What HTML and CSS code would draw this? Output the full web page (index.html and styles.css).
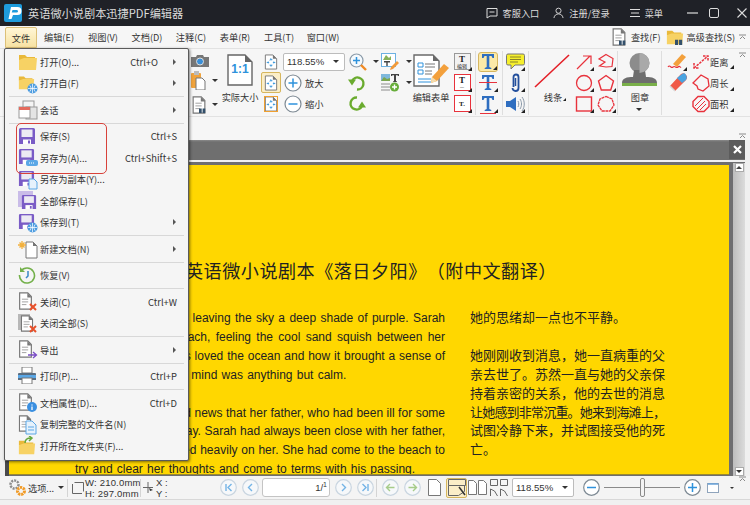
FILE: index.html
```html
<!DOCTYPE html>
<html lang="zh-CN">
<head>
<meta charset="utf-8">
<title>迅捷PDF编辑器</title>
<link rel="stylesheet" href="styles.css">
</head>
<body>
<svg class="defs" width="0" height="0">
  <symbol id="folder" viewBox="0 0 20 20"><path d="M1 3h6l2 2h8v3H1z" fill="#e9b93a"/><path d="M1 18V8l5-2h13l-1 12z" fill="#f7d264"/></symbol>
  <symbol id="globe" viewBox="0 0 12 12"><circle cx="6" cy="6" r="5.500" fill="#4a9be0"/><path d="M1 6h10M6 1v10M3 2.500c2 3 2 4 0 7M9 2.500c-2 3-2 4 0 7" stroke="#fff" stroke-width=".8" fill="none"/></symbol>
  <symbol id="floppy" viewBox="0 0 18 18"><path d="M1 2.500A1.500 1.500 0 0 1 2.500 1h13A1.500 1.500 0 0 1 17 2.500V17H1z" fill="#7a5cc6"/><rect x="3.500" y="2.500" width="11" height="7.500" fill="#eceaf3"/><rect x="5" y="12.500" width="8" height="4.500" fill="#fff"/><rect x="10" y="13.500" width="2" height="3" fill="#7a5cc6"/></symbol>
  <symbol id="doc" viewBox="0 0 16 20"><path d="M1.500 1h9l4 4v14h-13z" fill="#fff" stroke="#777" stroke-width="1.300"/><path d="M10 1l5 5h-5z" fill="#777"/><path d="M4 8h7M4 11h7M4 14h5" stroke="#999"/></symbol>
  <symbol id="xmark" viewBox="0 0 8 8"><path d="M1 1l6 6M7 1L1 7" stroke="#e8502a" stroke-width="2"/></symbol>
  <symbol id="fitdoc" viewBox="0 0 14 17"><path d="M1 1h8l4 4v11H1z" fill="#fff" stroke="#777"/><path d="M9 1l4 4H9z" fill="#777"/><path d="M7 5v2M5.500 6.500L7 5l1.500 1.500M7 13v-2M5.500 11.500L7 13l1.500-1.500M3 9h2M9 9h2M4 8l-1 1 1 1M10 8l1 1-1 1" stroke="#2e92dc" fill="none"/></symbol>
  <symbol id="tee" viewBox="0 0 16 17"><path d="M2 1h12v4h-1.500L11.500 3H9.300v11l2 1v1H4.700v-1l2-1V3H4.500L3.500 5H2z" fill="#2f6ec0"/></symbol>
  <symbol id="poly" viewBox="0 0 18 18"><path d="M9 1.500l7.500 5.500-2.800 9H4.300L1.500 7z" fill="none" stroke="#e8323c" stroke-width="1.400"/></symbol>
  <symbol id="rotate" viewBox="0 0 18 18"><path d="M4 7A6 6 0 1 1 9 15.500" fill="none" stroke="#6aab2e" stroke-width="2.400"/><path d="M0 5.500h8L4 11.500z" fill="#6aab2e"/></symbol>
  <symbol id="caret" viewBox="0 0 6 3"><path d="M0 0h6L3 3z" fill="#333"/></symbol>
  <symbol id="grip" viewBox="0 0 7 6"><path d="M0 1h7M1 5l2.500-2.500L6 5" stroke="#8a8a8a" fill="none"/></symbol>
  <symbol id="nav" viewBox="0 0 17 17"><circle cx="8.500" cy="8.500" r="7.800" fill="#f6f8fa" stroke="#c9d5e0" stroke-width="1.200"/></symbol>
</svg>

<div class="window">
  <header class="titlebar">
    <svg class="logo" width="18" height="18" viewBox="0 0 18 18"><rect width="18" height="18" rx="2" fill="#1e9bdc"/><path d="M7 3h6.500a3 3 0 0 1 0 8H9l-1.500 4H4.500z" fill="#fff"/><path d="M8.500 6l-.8 2.500h5a1.200 1.200 0 0 0 0-2.500z" fill="#1e9bdc"/></svg>
    <span class="app-name">英语微小说剧本迅捷PDF编辑器</span>
    <div class="title-actions">
      <svg width="12" height="12" viewBox="0 0 12 12"><path d="M1 1.500h10v7.500H4L1 11z" fill="none" stroke="#ddd"/><path d="M3.500 5h5" stroke="#ddd"/></svg>
      <span class="ta ta-service">客服入口</span>
      <svg width="11" height="12" viewBox="0 0 12 12"><circle cx="6" cy="3.500" r="2.800" fill="none" stroke="#ddd"/><path d="M1 11.500c.5-3 2.500-4.500 5-4.500s4.500 1.500 5 4.500" fill="none" stroke="#ddd"/></svg>
      <span class="ta ta-login">注册/登录</span>
      <svg width="10" height="10" viewBox="0 0 10 10"><path d="M0 1.500h10M1 5h8M0 8.500h10" stroke="#ddd"/></svg>
      <span class="ta ta-menu">菜单</span>
      <svg class="win-min" width="11" height="2" viewBox="0 0 11 2"><path d="M0 1h11" stroke="#ddd" stroke-width="1.200"/></svg>
      <svg class="win-max" width="10" height="10" viewBox="0 0 10 10"><rect x=".5" y=".5" width="9" height="9" rx="1.500" fill="none" stroke="#ddd"/></svg>
      <svg class="win-close" width="10" height="10" viewBox="0 0 10 10"><path d="M.5.500l9 9M9.500.500l-9 9" stroke="#ddd" stroke-width="1.100"/></svg>
    </div>
  </header>

  <nav class="menubar">
    <span class="mi mi-active">文件</span>
    <span class="mi">编辑(E)</span><span class="mi">视图(V)</span><span class="mi">文档(D)</span><span class="mi">注释(C)</span><span class="mi">表单(R)</span><span class="mi">工具(T)</span><span class="mi">窗口(W)</span>
    <div class="find">
      <svg width="16" height="18" viewBox="0 0 16 20"><use href="#doc"/><path d="M8 14h3v5H8zM12 14h3v5h-3z" fill="#33506b"/></svg>
      <span class="find-label">查找(F)</span>
      <svg class="adv" width="20" height="18" viewBox="0 0 20 20"><use href="#folder"/><path d="M10 13h3.500v6H10zM14.500 13H18v6h-3.500z" fill="#33506b"/></svg>
      <span class="find-label find-adv">高级查找(S)</span>
      <svg class="grip" width="7" height="6"><use href="#grip"/></svg>
    </div>
  </nav>

  <section class="ribbon">
    <div class="g g-hidden"></div>
    <div class="g g-clip">
      <svg width="18" height="13" viewBox="0 0 18 13"><path d="M0 3h5l1-2h6l1 2h5v10H0z" fill="#777"/><circle cx="9" cy="7.500" r="3.500" fill="#3a8fd8" stroke="#ddd"/></svg>
      <div class="with-caret"><svg width="15" height="19" viewBox="0 0 15 19"><rect y="2" width="10" height="15" rx="1" fill="#f0a33c"/><rect x="3" y="0" width="5" height="4" fill="#bbb"/><path d="M5 7h6l3 3v9H5z" fill="#fff" stroke="#777"/></svg><svg class="caret" width="6" height="3"><use href="#caret"/></svg></div>
      <div class="with-caret"><svg width="16" height="18" viewBox="0 0 16 20"><use href="#doc"/><path d="M8 14h3v5H8zM12 14h3v5h-3z" fill="#33506b"/></svg><svg class="caret caret-t" width="6" height="3"><use href="#caret"/></svg></div>
    </div>
    <div class="g g-actual">
      <svg width="26" height="32" viewBox="0 0 26 32"><path d="M1 1h17l7 7v23H1z" fill="#fff" stroke="#666" stroke-width="1.400"/><path d="M18 1l7 7h-7z" fill="#666"/></svg>
      <span class="one-one">1:1</span>
      <span class="lbl lbl-big">实际大小</span>
    </div>
    <div class="g g-zoom">
      <svg class="fit" width="14" height="16"><use href="#fitdoc"/></svg>
      <div class="combo"><span>118.55%</span><svg width="6" height="3"><use href="#caret"/></svg></div>
      <div class="with-caret wide"><svg width="18" height="18" viewBox="0 0 18 18"><circle cx="7.500" cy="7.500" r="6.500" fill="#f5fafe" stroke="#8a9aa8" stroke-width="1.200"/><path d="M4 7.500h7M7.500 4v7" stroke="#2e92dc" stroke-width="1.500"/><path d="M12 12l5 5" stroke="#f08a24" stroke-width="2.400"/></svg><svg class="caret" width="6" height="3"><use href="#caret"/></svg></div>
      <div class="fit fit-on"><svg width="14" height="16"><use href="#fitdoc"/></svg></div>
      <div class="zbtn"><svg width="18" height="18" viewBox="0 0 18 18"><circle cx="9" cy="9" r="8" fill="#fff" stroke="#7e8a94" stroke-width="1.200"/><path d="M4.500 9h9M9 4.500v9" stroke="#2e92dc" stroke-width="1.500"/></svg><span class="lbl">放大</span></div>
      <svg class="rot" width="18" height="18"><use href="#rotate"/></svg>
      <svg class="fit fit-o" width="14" height="16"><use href="#fitdoc"/></svg>
      <div class="zbtn"><svg width="18" height="18" viewBox="0 0 18 18"><circle cx="9" cy="9" r="8" fill="#fff" stroke="#7e8a94" stroke-width="1.200"/><path d="M4.500 9h9" stroke="#2e92dc" stroke-width="1.500"/></svg><span class="lbl">缩小</span></div>
      <svg class="rot rot-cw" width="18" height="18"><use href="#rotate"/></svg>
    </div>
    <div class="g g-img">
      <div class="with-caret"><svg width="20" height="19" viewBox="0 0 20 19"><rect x="1.500" y="1.500" width="14" height="13" fill="#fff" stroke="#6db1e2"/><path d="M3 8l3-5 3 3 2-2v4z" fill="#89b25a"/><path d="M4 9h6v1.500H7.700V14H6.300v-3.500H4z" fill="#444"/><path d="M10 18l1-3 6-6 2 2-6 6z" fill="#f19a3a"/></svg><svg class="caret" width="6" height="3"><use href="#caret"/></svg></div>
      <div class="with-caret"><svg width="20" height="19" viewBox="0 0 20 19"><rect x="1" y="1" width="9" height="7" fill="#7fb8dc"/><path d="M1 8l3-4 3 2 3-1v3z" fill="#7ba64f"/><path d="M11 1h8v2h-1l-.5-.8H16V8l1 .5V9h-4v-.5l1-.5V2.200h-1.500L12 3h-1z" fill="#444"/><path d="M1 11h9M1 14h9M1 17h9" stroke="#8c8c8c"/><circle cx="14.500" cy="14" r="4.500" fill="#67ad3a"/><path d="M12 14h5M14.500 11.500v5" stroke="#fff" stroke-width="1.400"/></svg><svg class="caret" width="6" height="3"><use href="#caret"/></svg></div>
    </div>
    <div class="g g-form">
      <svg width="36" height="33" viewBox="0 0 36 33"><path d="M1 1h19l6 6v25H1z" fill="#fff" stroke="#6a6a6a" stroke-width="1.400"/><path d="M20 1l6 6h-6z" fill="#6a6a6a"/><path d="M5 9h5v4H5zM5 16h5v4H5z" fill="none" stroke="#2e92dc"/><path d="M12 10h10M12 13h10M12 17h7M12 20h7" stroke="#777"/><path d="M5 25h13M5 28h13" stroke="#2e92dc"/><path d="M18 29l1-6 12-13 5 4-12 13z" fill="#f3a03c"/><path d="M18 29l1-6 5 4z" fill="#f4dcae"/></svg>
      <span class="lbl lbl-big">编辑表单</span>
    </div>
    <div class="g g-col sep">
      <div class="btn tri"><span class="tbox">T<small>编辑</small></span></div>
      <div class="btn tri"><span class="tbox red">T<small>—</small></span></div>
      <div class="btn tri"><span class="tbox red sm">T.</span></div>
    </div>
    <div class="g g-col g-c2 sep">
      <div class="btn tri on"><svg width="16" height="17"><use href="#tee"/></svg></div>
      <div class="btn tri"><svg width="16" height="17"><use href="#tee"/></svg><i class="strike"></i></div>
      <div class="btn tri"><svg width="16" height="17"><use href="#tee"/></svg><i class="under"></i></div>
    </div>
    <div class="g g-col g-c3 sep">
      <div class="btn tri"><svg width="19" height="17" viewBox="0 0 19 17"><path d="M2 1h15a1.500 1.500 0 0 1 1.500 1.500v8A1.500 1.500 0 0 1 17 12H9l-4 4v-4H2A1.500 1.500 0 0 1 .5 10.500v-8A1.500 1.500 0 0 1 2 1z" fill="#f6ef2c" stroke="#777"/><path d="M4 4h11M4 6.500h11M4 9h8" stroke="#8a8328"/></svg></div>
      <div class="btn tri"><svg width="9" height="19" viewBox="0 0 9 19"><path d="M2 14V4a2.500 2.500 0 0 1 5 0v11a3 3 0 0 1-6 0" transform="translate(.5 0)" fill="none" stroke="#234f9c" stroke-width="1.800"/><path d="M4.500 5v8" stroke="#234f9c" stroke-width="1.500"/></svg></div>
      <div class="btn tri"><svg width="19" height="16" viewBox="0 0 19 16"><path d="M0 5h4l6-4v14l-6-4H0z" fill="#2f6ec0"/><path d="M12 5c1 2 1 4 0 6M14 3c2 3 2 7 0 10M16 1c3 4 3 10 0 14" fill="none" stroke="#8a98a8"/></svg></div>
    </div>
    <div class="g g-shapes sep">
      <div class="line-col">
        <svg width="36" height="34" viewBox="0 0 36 34"><path d="M1 33L35 1" stroke="#e41e26" stroke-width="1.600"/></svg>
        <span class="lbl lbl-big tri">线条</span>
      </div>
      <div class="shape-grid">
        <div class="btn tri"><svg width="18" height="18" viewBox="0 0 18 18"><path d="M2 16L15 3M8 3h8v8" fill="none" stroke="#e8323c" stroke-width="1.200"/></svg></div>
        <div class="btn tri"><svg width="18" height="18" viewBox="0 0 18 18"><path d="M9 1.500l7 4-1 8-6 .5-6.500-1L8 9 2 6z" fill="none" stroke="#e8323c" stroke-width="1.200"/></svg></div>
        <div class="btn tri"><svg width="18" height="18" viewBox="0 0 18 18"><circle cx="9" cy="9" r="7.500" fill="none" stroke="#e8323c" stroke-width="1.300"/></svg></div>
        <div class="btn tri"><svg width="18" height="18"><use href="#poly"/></svg></div>
        <div class="btn tri"><svg width="18" height="18" viewBox="0 0 18 18"><rect x="1.500" y="2" width="15" height="14" fill="none" stroke="#e8323c" stroke-width="1.400"/></svg></div>
        <div class="btn tri"><svg width="18" height="18" viewBox="0 0 18 18"><path d="M9 1.500l6 2.500 2 6-4 6H5l-4-6 2-6z" fill="none" stroke="#e8323c" stroke-width="1.300" stroke-dasharray="3 .6"/></svg></div>
      </div>
    </div>
    <div class="g g-stamp sep">
      <svg width="35" height="36" viewBox="0 0 35 36"><circle cx="17.500" cy="10" r="10" fill="#8c8c8c"/><path d="M12 17h11l1 7c6 0 11 1 11 6v0H0c0-5 5-6 11-6z" fill="#6e6e6e"/><path d="M17.500 0a10 10 0 0 1 0 20z" fill="#a9a9a9"/><rect y="30" width="35" height="3" fill="#7ab04a"/></svg>
      <span class="lbl lbl-big">图章</span>
      <svg class="stamp-caret" width="6" height="3"><use href="#caret"/></svg>
    </div>
    <div class="g g-measure">
      <div class="btn tri"><svg width="20" height="19" viewBox="0 0 20 19"><path d="M6 12l9-10 4 3-9 10z" fill="#f3a03c"/><path d="M1 15c2-3 3 2 5 0s3 2 5 0 2 1 3 0" fill="none" stroke="#e8323c" stroke-width="1.200"/></svg></div>
      <div class="mrow tri"><svg width="18" height="16" viewBox="0 0 18 16"><path d="M2 14L16 2M2 9v5h5M11 2h5v5" fill="none" stroke="#e8323c" stroke-width="1.500" stroke-dasharray="2.500 1"/></svg><span class="lbl">距离</span></div>
      <div class="btn"><svg width="19" height="19" viewBox="0 0 19 19"><path d="M2 13L13 1c2-1 3-1 5 1s1 3 0 5L7 18z" fill="#f05a48"/><path d="M9 5l5-4c2-1 3-1 4 1s1 3 0 5l-4 3z" fill="#4aa3e0"/><path d="M2 13l5 5" stroke="#d8d8d8" stroke-width="1.500"/></svg></div>
      <div class="mrow tri"><svg width="18" height="18" viewBox="0 0 18 18"><path d="M9 1l7 4 1 7-6 5-5-2-1-3-4-3z" fill="none" stroke="#e8323c" stroke-width="1.300"/></svg><span class="lbl">周长</span></div>
      <div></div>
      <div class="mrow tri"><svg width="18" height="18" viewBox="0 0 18 18"><path d="M6 1.500h6l5 5v5l-5 5H6l-5-5v-5z" fill="none" stroke="#e8323c" stroke-width="1.400"/><path d="M3 11l8-8M5 14l8-8M8 15l6-6" stroke="#e8323c"/></svg><span class="lbl">面积</span></div>
    </div>
    <svg class="grip grip-r" width="7" height="6"><use href="#grip"/></svg>
  </section>

  <div class="subbar"><svg width="7" height="6"><use href="#grip"/></svg></div>

  <div class="tabbar">
    <button class="tab-close" type="button" aria-label="close">
      <svg width="9" height="9" viewBox="0 0 9 9"><path d="M1 1l7 7M8 1L1 8" stroke="#fff" stroke-width="2.200"/></svg>
    </button>
  </div>

  <main class="docarea">
    <article class="page">
      <h1 class="doc-title">英语微小说剧本《落日夕阳》（附中文翻译）</h1>
      <div class="doc-cols">
        <div class="en">
          <span class="ln j">The sun was setting, leaving the sky a deep shade of purple. Sarah</span>
          <span class="ln j">walked along the beach, feeling the cool sand squish between her</span>
          <span class="ln j">toes. She had always loved the ocean and how it brought a sense of</span>
          <span class="ln">peace, but today her mind was anything but calm.</span>
          <span class="ln gap"></span>
          <span class="ln j">She had just received news that her father, who had been ill for some</span>
          <span class="ln j">time, had passed away. Sarah had always been close with her father,</span>
          <span class="ln j">and his death weighed heavily on her. She had come to the beach to</span>
          <span class="ln">try and clear her thoughts and come to terms with his passing.</span>
        </div>
        <div class="zh">
          <span class="ln">她的思绪却一点也不平静。</span>
          <span class="ln gap"></span>
          <span class="ln">她刚刚收到消息，她一直病重的父</span>
          <span class="ln">亲去世了。苏然一直与她的父亲保</span>
          <span class="ln">持着亲密的关系，他的去世的消息</span>
          <span class="ln tight">让她感到非常沉重。她来到海滩上，</span>
          <span class="ln">试图冷静下来，并试图接受他的死</span>
          <span class="ln">亡。</span>
        </div>
      </div>
    </article>
    <div class="scrollbar">
      <span class="sb-btn"><svg width="6" height="3" viewBox="0 0 6 3"><path d="M3 0l3 3H0z" fill="#444"/></svg></span>
      <span class="sb-btn"><svg width="6" height="3"><use href="#caret"/></svg></span>
    </div>
  </main>

  <footer class="statusbar">
    <svg class="st-gear" width="19" height="19" viewBox="0 0 19 19"><circle cx="6.500" cy="6.500" r="4" fill="none" stroke="#8c8c8c" stroke-width="2.500" stroke-dasharray="2 1"/><circle cx="13" cy="13" r="3.500" fill="none" stroke="#f19a24" stroke-width="3" stroke-dasharray="2.200 .8"/></svg>
    <span class="lbl st-opt">选项...</span>
    <svg class="st-caret" width="6" height="3"><use href="#caret"/></svg>
    <i class="st-sep"></i>
    <svg class="st-size" width="12" height="13" viewBox="0 0 12 13"><path d="M2.500 1.500h9v9" fill="none" stroke="#666"/><path d="M.5 3v9.500H10" fill="none" stroke="#666"/></svg>
    <div class="st-dim"><span>W: 210.0mm</span><span>H: 297.0mm</span></div>
    <i class="st-sep st-sep2"></i>
    <svg class="st-cross" width="11" height="12" viewBox="0 0 11 12"><path d="M5 0v11M0 5.500h10" stroke="#666"/><path d="M6 6l4 2-3 1z" fill="#333"/></svg>
    <div class="st-xy"><span>X :</span><span>Y :</span></div>
    <svg class="nav nav-first" width="17" height="17" viewBox="0 0 17 17"><use href="#nav"/><path d="M6 5v7M11.500 5l-3.500 3.500 3.500 3.500" fill="none" stroke="#74b4e6" stroke-width="1.400"/></svg>
    <svg class="nav" width="17" height="17" viewBox="0 0 17 17"><use href="#nav"/><path d="M10 5l-3.500 3.500L10 12" fill="none" stroke="#74b4e6" stroke-width="1.400"/></svg>
    <div class="pagebox"><span>1/</span><small>1</small></div>
    <svg class="nav" width="17" height="17" viewBox="0 0 17 17"><use href="#nav"/><path d="M7 5l3.500 3.500L7 12" fill="none" stroke="#74b4e6" stroke-width="1.400"/></svg>
    <svg class="nav" width="17" height="17" viewBox="0 0 17 17"><use href="#nav"/><path d="M11 5v7M5.500 5l3.500 3.500L5.500 12" fill="none" stroke="#74b4e6" stroke-width="1.400"/></svg>
    <i class="st-sep st-sep3"></i>
    <svg class="nav nav-back" width="17" height="17" viewBox="0 0 17 17"><use href="#nav"/><path d="M4.500 8.500h8M8 5L4.500 8.500 8 12" fill="none" stroke="#a6cc8a" stroke-width="1.400"/></svg>
    <svg class="nav" width="17" height="17" viewBox="0 0 17 17"><use href="#nav"/><path d="M4.500 8.500h8M9 5l3.500 3.500L9 12" fill="none" stroke="#a6cc8a" stroke-width="1.400"/></svg>
    <svg class="pg-single" width="13" height="17" viewBox="0 0 13 17"><path d="M.5.500h8l4 4v12H.5z" fill="#fff" stroke="#777"/></svg>
    <div class="pg-on"><svg width="18" height="17" viewBox="0 0 18 17"><path d="M.5 .5h17v6H.5zM.5 6.500v10h10l6-4v-6" fill="none" stroke="#666"/><path d="M11 8l6 8" stroke="#333" stroke-width="1.500"/></svg></div>
    <svg class="pg pg-two" width="19" height="15" viewBox="0 0 19 15"><path d="M.5.500h5l3 3v11h-8zM10.500.500h5l3 3v11h-8z" fill="#fff" stroke="#777"/></svg>
    <svg class="pg" width="18" height="18" viewBox="0 0 18 18"><path d="M.5.500h7v6h-7zM10.500.500h7v6h-7zM.5 17v-7l4 2 3 5M10.500 17v-7l4 2 3 5" fill="none" stroke="#666"/></svg>
    <div class="combo combo-st"><span>118.55%</span><svg width="6" height="3"><use href="#caret"/></svg></div>
    <svg class="z-minus" width="17" height="17" viewBox="0 0 17 17"><circle cx="8.500" cy="8.500" r="7.800" fill="#fff" stroke="#7e8a94" stroke-width="1.200"/><path d="M4 8.500h9" stroke="#2e92dc" stroke-width="1.500"/></svg>
    <div class="slider"><i class="thumb"></i></div>
    <svg width="17" height="17" viewBox="0 0 17 17"><circle cx="8.500" cy="8.500" r="7.800" fill="#fff" stroke="#7e8a94" stroke-width="1.200"/><path d="M4 8.500h9M8.500 4v9" stroke="#2e92dc" stroke-width="1.500"/></svg>
    <svg class="st-fit" width="12" height="10" viewBox="0 0 12 10"><rect x=".5" y=".5" width="11" height="9" fill="#fff" stroke="#8fa4bc"/><path d="M1 1h10" stroke="#6aa3d8" stroke-width="1.500"/></svg>
    <svg class="st-more" width="4" height="2"><use href="#caret"/></svg>
    <svg class="grip st-grip" width="7" height="6"><use href="#grip"/></svg>
  </footer>

  <div class="filemenu">
    <div class="row"><svg class="mic" width="20" height="20"><use href="#folder"/></svg><span class="txt">打开(O)...</span><span class="key key-a">Ctrl+O</span><i class="arr"></i></div>
    <div class="row"><svg class="mic" width="20" height="20" viewBox="0 0 20 20"><use href="#folder" width="17" height="17"/><use href="#globe" x="9" y="9" width="11" height="11"/></svg><span class="txt">打开自(F)</span><i class="arr"></i></div>
    <hr class="msep">
    <div class="row"><svg class="mic" width="20" height="20" viewBox="0 0 20 20"><rect x="5" y="1" width="11" height="14" fill="#f4f4f4" stroke="#999"/><rect x="8" y="7" width="11" height="12" fill="#e4e4e4" stroke="#999"/><rect x="1" y="7" width="11" height="11" fill="#fff" stroke="#999"/><rect x="1" y="7" width="11" height="3" fill="#e46a5c"/></svg><span class="txt">会话</span><i class="arr"></i></div>
    <hr class="msep">
    <div class="row"><svg class="mic" width="18" height="18"><use href="#floppy"/></svg><span class="txt">保存(S)</span><span class="key">Ctrl+S</span></div>
    <div class="row"><svg class="mic" width="20" height="20" viewBox="0 0 20 20"><use href="#floppy" width="17" height="17"/><rect x="8" y="12" width="12" height="6" rx="2" fill="#5aa7e6"/><path d="M11 15h6" stroke="#fff" stroke-dasharray="1 1"/></svg><span class="txt">另存为(A)...</span><span class="key">Ctrl+Shift+S</span></div>
    <div class="row"><svg class="mic" width="20" height="20" viewBox="0 0 20 20"><use href="#floppy" width="17" height="17"/><path d="M11 9h5l3 3v7h-8z" fill="#e6f2fc" stroke="#5aa7e6"/></svg><span class="txt">另存为副本(Y)...</span></div>
    <div class="row"><svg class="mic" width="20" height="20" viewBox="0 0 20 20"><rect width="15" height="16" fill="#c9bce8"/><use href="#floppy" x="3" y="3" width="16" height="16"/></svg><span class="txt">全部保存(L)</span></div>
    <div class="row"><svg class="mic" width="20" height="20" viewBox="0 0 20 20"><use href="#floppy" width="17" height="17"/><use href="#globe" x="9" y="9" width="11" height="11"/></svg><span class="txt">保存到(T)</span><i class="arr"></i></div>
    <hr class="msep">
    <div class="row"><svg class="mic" width="20" height="20" viewBox="0 0 20 20"><path d="M8 3h7l4 4v12H8z" fill="#fff" stroke="#777"/><path d="M15 3l4 4h-4z" fill="#777"/><path d="M4 2v8M0 6h8M1.500 3.500l5 5M6.500 3.500l-5 5" stroke="#f2b03c" stroke-width="1.300"/></svg><span class="txt">新建文档(N)</span><i class="arr"></i></div>
    <hr class="msep">
    <div class="row"><svg class="mic" width="18" height="18" viewBox="0 0 18 18"><path d="M3 5a7.500 7.500 0 1 1-1.500 4" fill="none" stroke="#73b04a" stroke-width="1.600"/><path d="M2 1v5h5z" fill="#73b04a"/><path d="M10 5v5l-2 2" fill="none" stroke="#3a86c8" stroke-width="1.500"/></svg><span class="txt">恢复(V)</span></div>
    <hr class="msep">
    <div class="row"><svg class="mic" width="20" height="20" viewBox="0 0 20 20"><use href="#doc" width="15" height="18"/><use href="#xmark" x="11" y="11" width="8" height="8"/></svg><span class="txt">关闭(C)</span><span class="key">Ctrl+W</span></div>
    <div class="row"><svg class="mic" width="20" height="20" viewBox="0 0 20 20"><rect y="0" width="12" height="16" fill="#b8b8b8"/><use href="#doc" x="2" y="1" width="14" height="17"/><use href="#xmark" x="11" y="11" width="8" height="8"/></svg><span class="txt">关闭全部(S)</span></div>
    <hr class="msep">
    <div class="row"><svg class="mic" width="20" height="20" viewBox="0 0 20 20"><use href="#doc" width="15" height="18"/><path d="M10 15h8M15 12l3.500 3-3.500 3" fill="none" stroke="#7a4cc6" stroke-width="1.300"/></svg><span class="txt">导出</span><i class="arr"></i></div>
    <hr class="msep">
    <div class="row"><svg class="mic" width="18" height="17" viewBox="0 0 18 17"><rect x="4" y="0" width="10" height="6" fill="#fff" stroke="#777"/><path d="M1 6h16a1 1 0 0 1 1 1v6H0V7a1 1 0 0 1 1-1z" fill="#5a6d80"/><rect x="0" y="8" width="18" height="3" fill="#5aa7e6"/><rect x="4" y="11" width="10" height="6" fill="#fff" stroke="#777"/></svg><span class="txt">打印(P)...</span><span class="key">Ctrl+P</span></div>
    <hr class="msep">
    <div class="row"><svg class="mic" width="20" height="20" viewBox="0 0 20 20"><use href="#doc" width="15" height="18"/><circle cx="14" cy="14" r="5" fill="#3a8fe0"/><path d="M14 11.500v1M14 13.500v3.500" stroke="#fff" stroke-width="1.300"/></svg><span class="txt">文档属性(D)...</span><span class="key">Ctrl+D</span></div>
    <div class="row"><svg class="mic" width="20" height="20" viewBox="0 0 20 20"><use href="#doc" width="14" height="17"/><path d="M8 6h6l4 4v9H8z" fill="#e6f2fc" stroke="#5aa7e6"/><path d="M10 12h6M10 15h6" stroke="#5aa7e6"/></svg><span class="txt">复制完整的文件名(N)</span></div>
    <div class="row"><svg class="mic" width="20" height="20" viewBox="0 0 20 20"><use href="#folder" y="2" width="18" height="18"/><path d="M7 7c0-3 2-5 6-5M11 0l3 2-3 3" fill="none" stroke="#66a83e" stroke-width="1.500"/></svg><span class="txt">打开所在文件夹(F)...</span></div>
    <div class="callout"></div>
  </div>
</div>
</body>
</html>
```

FILE: styles.css
```css
* { box-sizing: border-box; }
html, body { margin: 0; padding: 0; overflow: hidden; }
body { width: 750px; height: 505px; background: #f0f0f0; font-family: "Noto Sans CJK SC", "Liberation Sans", sans-serif; color: #333; }
svg { display: block; flex: none; }
.defs { position: absolute; }
.window { position: relative; width: 750px; height: 505px; display: flex; flex-direction: column; overflow: hidden; }

.titlebar { height: 26px; background: #1f2127; display: flex; align-items: center; padding-left: 4px; color: #dcdcdc; }
.app-name { margin-left: 6px; font-size: 11.200px; }
.title-actions { margin-left: auto; display: flex; align-items: center; font-size: 9.200px; }
.ta-service { margin: 0 14px 0 5px; }
.ta-login { margin: 0 20px 0 5px; }
.ta-menu { margin: 0 24px 0 5px; }
.win-max { margin: 0 18px 0 11px; }
.win-close { margin-right: 3px; }

.menubar { height: 23px; background: #f6f6f6; border-bottom: 1px solid #e2e2e2; display: flex; align-items: center; padding-left: 5px; font-size: 9.200px; }
.mi { width: 44px; text-align: center; color: #333; line-height: 20px; }
.mi-active { width: 32px; height: 21px; background: linear-gradient(#fff6d6, #f7e2a2); border: 1px solid #dcc078; border-radius: 2px 2px 0 0; }
.find { margin-left: auto; display: flex; align-items: center; height: 22px; }
.find-label { margin-left: 4px; }
.find-adv { margin-left: 2px; }
.adv { margin-left: 4px; }
.grip { margin-left: 4px; margin-right: 4px; }

.ribbon { height: 68px; background: #f6f6f6; border-bottom: 1px solid #e2e2e2; display: flex; padding-top: 2px; font-size: 9.200px; position: relative; }
.g { height: 64px; flex: none; }
.g-hidden { width: 188px; }
.sep { border-right: 1px solid #dedede; }
.lbl { font-size: 9.200px; color: #333; white-space: nowrap; }
.lbl-big { display: block; text-align: center; line-height: 12px; }
.caret { margin-left: 6px; }
.caret-t { margin-left: 5px; }
.with-caret { display: flex; align-items: center; height: 21px; }
.wide { padding-left: 1px; }

.g-clip { width: 32px; padding-left: 3px; display: flex; flex-direction: column; justify-content: space-between; padding-top: 3px; }
.g-actual { width: 41px; padding: 3px 0 0 7px; position: relative; }
.g-actual .lbl-big { margin: 5px 0 0 -6px; width: 38px; }
.one-one { position: absolute; left: 7px; top: 11px; width: 26px; text-align: center; font: bold 12px "Liberation Sans", sans-serif; color: #2e92dc; }

.g-zoom { width: 115px; display: grid; grid-template-columns: 22px 65px 28px; grid-auto-rows: 21px; align-items: center; }
.fit { margin-left: 3px; }
.fit-on { margin: 0; width: 20px; height: 21px; display: flex; align-items: center; justify-content: center; background: #fbeec8; border: 1px solid #d6b65e; border-radius: 2px; }
.fit-o { outline: 1px solid #f0a030; outline-offset: -1px; }
.rot-cw { transform: rotate(180deg); }
.combo { height: 18px; width: 62px; background: #fff; border: 1px solid #bcbcbc; border-radius: 2px; display: flex; align-items: center; justify-content: space-between; padding: 0 5px 0 3px; font: 9.600px "Liberation Sans", sans-serif; color: #333; }
.zbtn { display: flex; align-items: center; gap: 3px; padding-left: 1px; }

.g-img { width: 34px; padding-left: 4px; }
.g-form { width: 42px; padding: 3px 0 0 3px; }
.g-form .lbl-big { margin: 4px 0 0 -3px; width: 42px; }

.g-col { width: 24px; display: grid; grid-auto-rows: 21px; justify-items: center; align-items: center; padding: 0 3px 0 0; }
.g-c2 { width: 27px; padding: 0 2px 0 0; }
.g-c3 { width: 26px; padding: 0 1px 0 0; }
.btn { position: relative; width: 20px; height: 20px; display: flex; align-items: center; justify-content: center; }
.tri::after { content: ""; position: absolute; right: 0; bottom: 1px; border-style: solid; border-width: 0 0 4px 4px; border-color: transparent transparent #222 transparent; }
.tbox { width: 17px; height: 17px; border: 1px solid #999; display: flex; flex-direction: column; align-items: center; justify-content: center; font: bold 9px/8px "Liberation Serif", serif; color: #222; background: #f2f2f2; }
.tbox small { font: 5px/5px "Noto Sans CJK SC", sans-serif; }
.tbox.red { border-color: #e8323c; background: #fff; }
.tbox.sm { font-size: 7px; }
.on { background: #fbe9a8; border: 1px solid #d6b65e; border-radius: 3px; }
.strike { position: absolute; left: 1px; right: 1px; top: 9px; height: 1px; background: #e8323c; }
.under { position: absolute; left: 2px; right: 2px; bottom: 0; height: 1px; background: #e8323c; }

.g-shapes { width: 89px; display: flex; }
.line-col { width: 44px; padding: 3px 0 0 5px; }
.line-col .lbl-big { margin: 3px 0 0 8px; width: 22px; position: relative; }
.line-col .lbl-big::after { right: -2px; bottom: 2px; border-width: 0 0 3px 3px; }
.shape-grid { display: grid; grid-template-columns: 22px 22px; grid-auto-rows: 21px; align-items: center; justify-items: center; }

.g-stamp { width: 44px; padding: 2px 0 0 4px; }
.g-stamp .lbl-big { margin: 2px 0 0 -4px; width: 44px; }
.stamp-caret { margin: 5px 0 0 14px; }

.g-measure { width: 78px; display: grid; grid-template-columns: 25px 51px; grid-auto-rows: 21px; align-items: center; padding-left: 5px; }
.mrow { position: relative; display: flex; align-items: center; width: 42px; }
.grip-r { position: absolute; right: 0; top: 3px; }

.subbar { height: 23px; background: #f6f6f6; display: flex; justify-content: flex-end; align-items: flex-end; padding: 0 4px 1px 0; }

.tabbar { height: 20px; margin-left: 8px; margin-right: 5px; background: linear-gradient(#8a8a8a 0, #6f6f6f 2px, #6f6f6f 100%); display: flex; justify-content: flex-end; }
.tab-close { width: 16px; height: 19px; padding: 0; border: 0; background: #5c5c5c; display: flex; align-items: center; justify-content: center; }

.docarea { height: 316px; margin-left: 5px; margin-right: 5px; background: #6e6e70; display: flex; padding-top: 3px; border-top: 2px solid #f0f0f0; border-left: 4px solid #4a4a4c; }
.page { width: 720px; height: 310px; background: #ffd700; padding-left: 66px; overflow: hidden; color: #222; flex: none; border-bottom: 1px solid #9a8a30; text-spacing-trim: space-all; }
.doc-title { margin: 92px 0 0 110px; font-size: 18.100px; letter-spacing: .5px; font-weight: 400; line-height: 27px; white-space: nowrap; }
.doc-cols { display: grid; grid-template-columns: 370px 196px; column-gap: 25px; margin-top: 25px; }
.en { font: 12px/18.900px "Liberation Sans", sans-serif; }
.ln { display: block; white-space: nowrap; }
.en .ln { word-spacing: .9px; }
.en .j { text-align-last: justify; white-space: normal; word-spacing: 0; }
.gap { height: 18.900px; }
.zh { font-size: 13px; line-height: 18.900px; margin-top: -1px; }
.tight { letter-spacing: -.8px; }
.scrollbar { margin-left: 4px; width: 12px; margin-top: -2px; background: linear-gradient(90deg, #bdbdbd, #dcdcdc); display: flex; flex-direction: column; justify-content: space-between; align-items: center; }
.sb-btn { width: 9px; height: 9px; background: #fff; border: 1px solid #aaa; display: flex; align-items: center; justify-content: center; }

.statusbar { height: 24px; background: #f4f4f4; border-bottom: 1px solid #d8d8d8; display: flex; align-items: center; font-size: 9.200px; position: relative; }
.st-gear { margin-left: 8px; }
.st-opt { margin-left: 1px; width: 26px; }
.st-caret { margin-left: 4px; }
.st-sep { width: 1px; height: 18px; background: #d4d4d4; margin-left: 3px; flex: none; }
.st-sep2 { margin-left: 4px; }
.st-sep3 { margin-left: 2px; }
.st-size { margin-left: 4px; }
.st-dim, .st-xy { display: flex; flex-direction: column; font: 9.500px/11px "Liberation Sans", sans-serif; color: #333; white-space: nowrap; }
.st-dim { margin-left: 1px; width: 51px; letter-spacing: .2px; }
.st-cross { margin-left: 2px; }
.st-xy { margin-left: 2px; width: 12px; }
.nav { margin-left: 5px; }
.nav-first { margin-left: 52px; }
.pagebox { width: 68px; height: 19px; margin-left: 3px; background: #fff; border: 1px solid #c4c4c4; border-radius: 3px; display: flex; align-items: center; justify-content: flex-end; padding-right: 2px; font: 9.500px "Liberation Sans", sans-serif; }
.pagebox small { font-size: 7px; align-self: flex-start; margin-top: 2px; }
.pg { margin-left: 3px; }
.pg-two { margin-left: 1px; }
.pg-single { margin-left: 7px; }
.pg-on { width: 21px; height: 20px; margin-left: 5px; background: #fbeec8; border: 1px solid #d6b65e; border-radius: 2px; display: flex; align-items: center; justify-content: center; }
.combo-st { height: 19px; margin-left: 4px; }
.z-minus { margin-left: 9px; }
.slider { position: relative; width: 76px; height: 1px; background: #8a8a8a; margin: 0 4px; }
.thumb { position: absolute; left: 36px; top: -9px; width: 5px; height: 19px; background: #f4f4f4; border: 1px solid #8a8a8a; border-radius: 2px; }
.st-fit { margin-left: 6px; }
.st-more { margin-left: 11px; }
.st-grip { position: absolute; right: 0; top: 0; }

.filemenu { position: absolute; left: 4px; top: 48px; width: 185px; height: 413px; padding-top: 2px; background: #f5f5f5; border: 1px solid #5a5a5a; border-radius: 2px; box-shadow: 1px 1px 3px rgba(0,0,0,.5); font-size: 9.200px; color: #333; }
.row { position: relative; display: flex; align-items: center; height: 21.500px; padding: 0 11px 0 35px; white-space: nowrap; }
.mic { position: absolute; left: 13px; top: 1px; }
.key { margin-left: auto; font-size: 9.400px; }
.key-a { margin-right: 4px; }
.arr { width: 0; height: 0; border-left: 3px solid #555; border-top: 3px solid transparent; border-bottom: 3px solid transparent; margin-left: auto; margin-right: 1px; }
.key + .arr { margin-left: 11px; }
.msep { height: 1px; margin: 2px 4px; border: 0; background: #d8d8d8; }
.callout { position: absolute; left: 11px; top: 74px; width: 91px; height: 51px; border: 1.500px solid #d8423a; border-radius: 5px; }
```
